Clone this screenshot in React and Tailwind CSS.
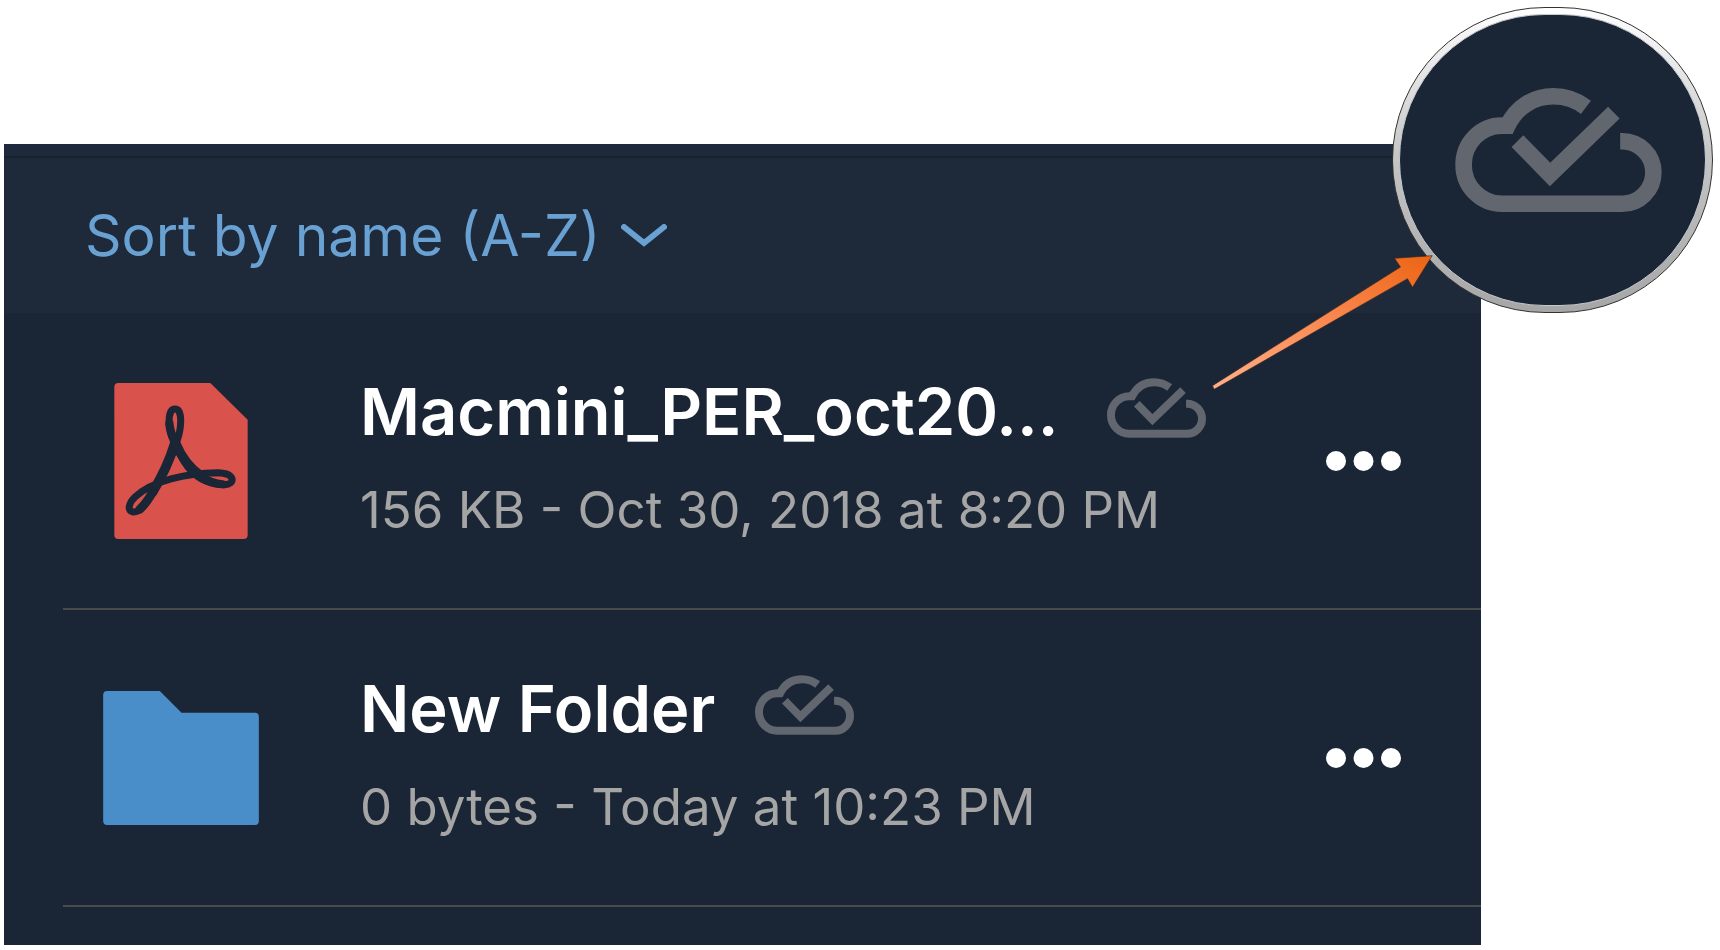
const files = [
  {
    name: "Macmini_PER_oct20...",
    details: "156 KB - Oct 30, 2018 at 8:20 PM",
    Icon: PdfIcon,
    nameWidth: "w-[707px]",
  },
  {
    name: "New Folder",
    details: "0 bytes - Today at 10:23 PM",
    Icon: FolderIcon,
    nameWidth: "",
  },
];

function CloudCheck({ className }) {
  return (
    <svg
      viewBox="225 262 621 373"
      className={className}
      fill="none"
      stroke="#62666f"
      strokeWidth="50"
      aria-hidden="true"
    >
      <path d="M618 320C590 299 555 287 520 287C460 287 410 319 382 375H365A115 117.500 0 0 0 365 610H727A94 94 0 0 0 727 422H721" />
      <path d="M412 422L510 522L702 336" />
    </svg>
  );
}

function PdfIcon() {
  return (
    <svg viewBox="75 68 400 468" className="h-[156px] w-[134px]" aria-hidden="true">
      <path
        fill="#da524c"
        d="M87 68H363L475 178V524Q475 536 463 536H87Q75 536 75 524V80Q75 68 87 68Z"
      />
      <g fill="none" stroke="#1a2635" strokeLinecap="round" strokeLinejoin="round">
        <path
          strokeWidth="21"
          d="M254 245C234 205 234 146 257 146C281 146 277 205 262 245C247 292 217 356 194 392C168 438 147 457 131 455C114 452 116 431 137 410C190 360 290 339 385 337C439 338 439 373 405 373C300 372 272 280 254 245Z"
        />
        <path strokeWidth="29" d="M256 250C241 300 216 352 190 395" />
        <path strokeWidth="28" d="M260 250C278 294 304 325 336 347" />
        <path strokeWidth="26" d="M190 395C178 416 164 436 151 447" />
        <path strokeWidth="24" d="M336 350C355 362 376 370 400 372" />
        <path strokeWidth="25" d="M258 247C248 226 241 207 240 188" />
      </g>
    </svg>
  );
}

function FolderIcon() {
  return (
    <svg viewBox="131 93 467 402" className="h-[134px] w-[156px]" aria-hidden="true">
      <path
        fill="#498ec9"
        d="M143 93H301L366 158H586Q598 158 598 170V483Q598 495 586 495H143Q131 495 131 483V105Q131 93 143 93Z"
      />
    </svg>
  );
}

function FileRow({ file }) {
  const { name, details, Icon, nameWidth } = file;
  return (
    <li className="ml-[59px] flex h-[297px] items-center border-b-2 border-[#4a4b4d] pr-20 pl-10">
      <div className="flex w-[156px] shrink-0 justify-center">
        <Icon />
      </div>
      <div className="ml-[101px] min-w-0 flex-1 whitespace-nowrap">
        <div className="flex items-center gap-10">
          <h2 className={`text-[65px] leading-[80px] font-semibold text-white ${nameWidth}`}>
            {name}
          </h2>
          <CloudCheck className="mb-2 h-[60px] w-[99px] shrink-0" />
        </div>
        <p className="mt-[18px] text-[51px] leading-[80px] text-[#a5a5a5]">{details}</p>
      </div>
      <button type="button" aria-label={`More actions for ${name}`} className="shrink-0">
        <svg viewBox="0 0 75 20" className="h-5 w-[75px]" fill="#fff" aria-hidden="true">
          <circle cx="10" cy="10" r="10" />
          <circle cx="37.500" cy="10" r="10" />
          <circle cx="65" cy="10" r="10" />
        </svg>
      </button>
    </li>
  );
}

export default function App() {
  return (
    <div className="relative bg-white pt-36 pr-[239px] pb-[5px] pl-1 font-['Inter',sans-serif]">
      <main className="bg-[#1a2635] pb-[38px]">
        <div className="h-3 bg-[#1e293b]" />
        <header className="flex h-[157px] items-center border-t-2 border-[#17222f] bg-[#1e293a] pl-[81px]">
          <button type="button" className="flex items-center gap-5 text-[57px] leading-[72px] text-[#68a1d2]">
            Sort by name (A-Z)
            <svg viewBox="0 0 46 24" className="h-6 w-[46px]" fill="none" aria-hidden="true">
              <path d="M3 3L23 19L43 3" stroke="currentColor" strokeWidth="6" strokeLinecap="round" />
            </svg>
          </button>
        </header>
        <ul>
          {files.map((file) => (
            <FileRow key={file.name} file={file} />
          ))}
        </ul>
      </main>

      <div className="absolute top-[7px] right-[7px] rounded-full border border-[#333] bg-linear-to-b from-white via-[#c4c4c4] to-[#a6a6a6] p-1.5">
        <div className="flex h-[292px] w-[307px] items-center justify-center rounded-full border border-[#c5c9d0] bg-[#1a2635]">
          <CloudCheck className="mb-5 ml-3 h-[124px] w-[207px]" />
        </div>
      </div>

      <svg
        viewBox="67 74 662 405"
        className="absolute top-[255px] right-[287px] h-[135px] w-[221px]"
        aria-hidden="true"
      >
        <defs>
          <linearGradient id="arrow" x1="0" y1="1" x2="1" y2="0">
            <stop offset="0" stopColor="#ffb08c" />
            <stop offset="0.500" stopColor="#fa8a53" />
            <stop offset="1" stopColor="#ec6413" />
          </linearGradient>
        </defs>
        <path
          fill="url(#arrow)"
          stroke="#3c2a20"
          strokeWidth="2"
          d="M68 466L632 110L614 84L727 76L668 171L653 145L73 477Z"
        />
      </svg>
    </div>
  );
}
